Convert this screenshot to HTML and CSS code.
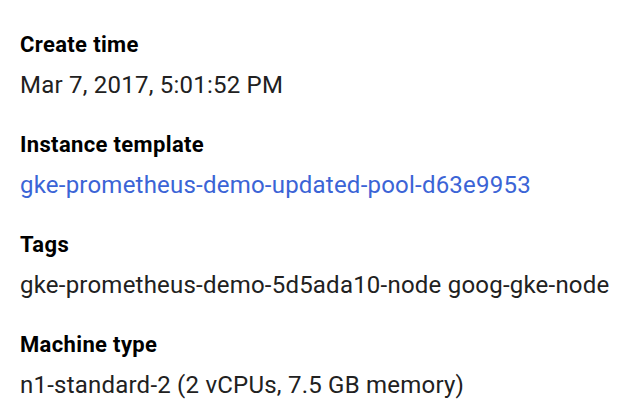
FILE: index.html
```html
<!DOCTYPE html>
<html>
<head>
<meta charset="utf-8">
<link rel="stylesheet" href="styles.css">
</head>
<body>
<div class="details">
  <div class="field">
    <div class="label">Create time</div>
    <div class="value">Mar 7, 2017, 5:01:52 PM</div>
  </div>
  <div class="field">
    <div class="label">Instance template</div>
    <div class="value"><a class="link" href="#">gke-prometheus-demo-updated-pool-d63e9953</a></div>
  </div>
  <div class="field">
    <div class="label">Tags</div>
    <div class="value">gke-prometheus-demo-5d5ada10-node goog-gke-node</div>
  </div>
  <div class="field">
    <div class="label">Machine type</div>
    <div class="value">n1-standard-2 (2 vCPUs, 7.5 GB memory)</div>
  </div>
</div>
</body>
</html>
```
FILE: styles.css
```css
html, body {
  margin: 0;
  padding: 0;
  background: #ffffff;
}
body {
  font-family: Roboto, "Liberation Sans", sans-serif;
  color: #212121;
}
.details {
  display: flex;
  flex-direction: column;
  gap: 30px;
  padding: 31px 20px 0 20px;
}
.field {
  display: flex;
  flex-direction: column;
  gap: 10px;
}
.label {
  font-size: 22px;
  line-height: 28px;
  font-weight: 700;
  letter-spacing: 0.35px;
  color: #000000;
}
.value {
  font-size: 24px;
  line-height: 32px;
  letter-spacing: 0.22px;
  white-space: nowrap;
}
.link {
  color: #3b64d6;
  text-decoration: none;
}
```
